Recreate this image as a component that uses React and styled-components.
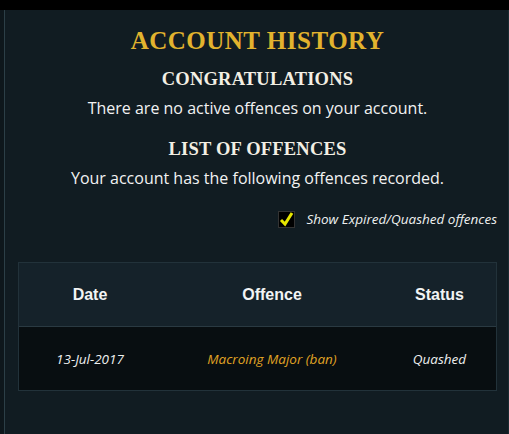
import React, { useState } from 'react';
import styled, { createGlobalStyle } from 'styled-components';

const GlobalStyle = createGlobalStyle`
  html, body {
    margin: 0;
    padding: 0;
    background: #0e171c;
  }
  body {
    font-family: "Open Sans", "Lato", sans-serif;
    color: #eef0f0;
  }
`;

const TopBar = styled.div`
  height: 10px;
  background: #000;
`;

const Shell = styled.div`
  display: flex;
  min-height: 424px;
`;

const Gutter = styled.div`
  width: 4px;
  background: #0e171c;
  border-right: 1px solid #2c3f47;
`;

const Panel = styled.main`
  flex: 1;
  background: #111c22;
  border-right: 1px solid #1a2a31;
  padding: 17px 11px 0 13px;
  display: flex;
  flex-direction: column;
  align-items: center;
`;

const Title = styled.h1`
  margin: 0;
  font-family: "Liberation Serif", "DejaVu Serif", serif;
  font-weight: bold;
  font-size: 25px;
  letter-spacing: 0.5px;
  color: #e2b32e;
  line-height: 28px;
`;

const Heading = styled.h2`
  margin: ${p => p.$top}px 0 0;
  font-family: "Liberation Serif", "DejaVu Serif", serif;
  font-weight: bold;
  font-size: 18.5px;
  letter-spacing: 0.2px;
  color: #f3efe4;
  line-height: 22px;
`;

const Text = styled.p`
  margin: 7px 0 0;
  font-size: 16px;
  line-height: 22px;
  color: #f2f2f2;
`;

const ToggleRow = styled.label`
  align-self: flex-end;
  display: flex;
  align-items: center;
  gap: 11px;
  margin-top: 21px;
  font-size: 13.5px;
  font-style: italic;
  color: #eef0f0;
  cursor: pointer;
`;

const Box = styled.span`
  width: 15px;
  height: 15px;
  background: #000;
  border: 1px solid #333;
  display: flex;
  align-items: center;
  justify-content: center;
`;

const Table = styled.div`
  align-self: stretch;
  margin-top: 34px;
  border: 1px solid #22323a;
  display: grid;
  grid-template-columns: 142px 222px 1fr;
`;

const HeadCell = styled.div`
  height: 63px;
  background: #15222a;
  border-bottom: 1px solid #2a3a42;
  display: flex;
  align-items: center;
  justify-content: center;
  font-family: "Liberation Sans", Arial, sans-serif;
  font-weight: bold;
  font-size: 16px;
  color: #f2f4f4;
`;

const Cell = styled.div`
  height: 63px;
  background: #080e11;
  display: flex;
  align-items: center;
  justify-content: center;
  font-style: italic;
  font-size: 13.5px;
  color: ${p => (p.$gold ? '#e0a424' : '#eef0f0')};
`;

const offences = [
  { date: '13-Jul-2017', offence: 'Macroing Major (ban)', status: 'Quashed' },
];

export default function App() {
  const [showAll, setShowAll] = useState(true);

  return (
    <>
      <GlobalStyle />
      <TopBar />
      <Shell>
        <Gutter />
        <Panel>
          <Title>ACCOUNT HISTORY</Title>
          <Heading $top={13}>CONGRATULATIONS</Heading>
          <Text>There are no active offences on your account.</Text>
          <Heading $top={19}>LIST OF OFFENCES</Heading>
          <Text>Your account has the following offences recorded.</Text>
          <ToggleRow onClick={() => setShowAll(!showAll)}>
            <Box>
              {showAll && (
                <svg width="15" height="15" viewBox="0 0 15 15">
                  <path d="M2 8 L6 12 L13 1" fill="none" stroke="#e6e600" strokeWidth="3" />
                </svg>
              )}
            </Box>
            Show Expired/Quashed offences
          </ToggleRow>
          <Table>
            <HeadCell>Date</HeadCell>
            <HeadCell>Offence</HeadCell>
            <HeadCell>Status</HeadCell>
            {showAll &&
              offences.map(o => (
                <React.Fragment key={o.date}>
                  <Cell>{o.date}</Cell>
                  <Cell $gold>{o.offence}</Cell>
                  <Cell>{o.status}</Cell>
                </React.Fragment>
              ))}
          </Table>
        </Panel>
      </Shell>
    </>
  );
}
